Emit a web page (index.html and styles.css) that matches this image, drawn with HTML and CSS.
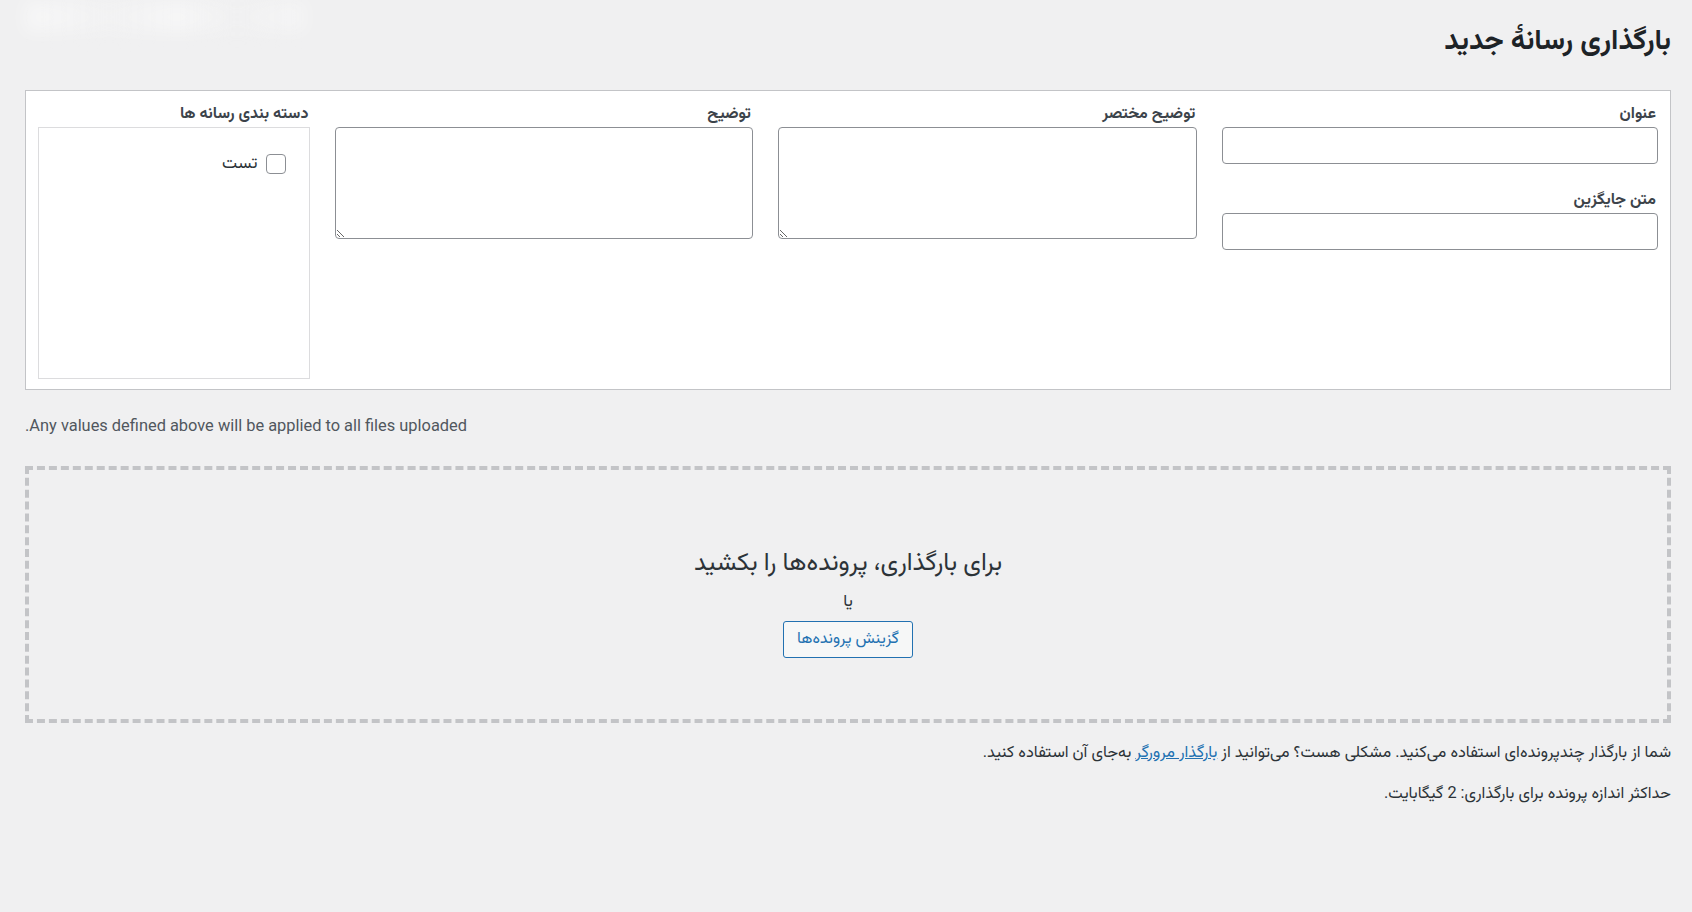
FILE: index.html
```html
<!DOCTYPE html>
<html lang="fa" dir="rtl">

<head>
    <meta charset="UTF-8">
    <meta name="viewport" content="width=device-width, initial-scale=1.0">
    <title>بارگذاری رسانهٔ جدید</title>
    <link rel="stylesheet" href="styles.css">
</head>

<body>

    <div class="wrap">
        <div class="page-header">
            <h1>بارگذاری رسانهٔ جدید</h1>
            <div class="blurred-bar"></div>
        </div>

        <div class="fields-box">
            <div class="field-col">
                <label class="field-label" for="title">عنوان</label>
                <input type="text" class="text-input" id="title">

                <label class="field-label second" for="alt">متن جایگزین</label>
                <input type="text" class="text-input" id="alt">
            </div>

            <div class="field-col">
                <label class="field-label" for="excerpt">توضیح مختصر</label>
                <textarea class="text-area" id="excerpt"></textarea>
            </div>

            <div class="field-col">
                <label class="field-label" for="content">توضیح</label>
                <textarea class="text-area" id="content"></textarea>
            </div>

            <div class="field-col">
                <span class="field-label">دسته بندی رسانه ها</span>
                <div class="cat-box">
                    <label class="cat-item">
                        <input type="checkbox" class="cat-check">
                        <span>تست</span>
                    </label>
                </div>
            </div>
        </div>

        <p class="note">Any values defined above will be applied to all files uploaded.</p>

        <div class="drop-area">
            <p class="drop-title">برای بارگذاری، پرونده‌ها را بکشید</p>
            <p class="drop-or">یا</p>
            <button type="button" class="btn-select">گزینش پرونده‌ها</button>
        </div>

        <p class="help-text">شما از بارگذار چندپرونده‌ای استفاده می‌کنید. مشکلی هست؟ می‌توانید از <a href="#">بارگذار مرورگر</a> به‌جای آن استفاده کنید.</p>
        <p class="help-text max-size">حداکثر اندازه پرونده برای بارگذاری: 2 گیگابایت.</p>
    </div>

</body>
</html>
```

FILE: styles.css
```css
body {
    margin: 0;
    background-color: #f0f0f1;
    color: #2c3338;
    font-family: Roboto, "Vazirmatn", "Noto Sans Arabic", "DejaVu Sans", sans-serif;
    font-size: 16px;
}

.wrap {
    margin: 0 21px 0 25px;
}

.page-header {
    display: flex;
    justify-content: space-between;
    align-items: flex-start;
    height: 90px;
}

.page-header h1 {
    margin: 22px 0 0;
    font-size: 28.5px;
    line-height: 36px;
    font-weight: 700;
    color: #1d2327;
}

.blurred-bar {
    width: 280px;
    height: 30px;
    margin: 2px 0 0 0;
    background: linear-gradient(90deg, rgba(255, 255, 255, 0.5), rgba(250, 250, 250, 0.2) 30%, rgba(255, 255, 255, 0.45) 55%, rgba(245, 245, 245, 0.15) 75%, rgba(255, 255, 255, 0.4));
    filter: blur(9px);
}

/* box of fields */
.fields-box {
    display: grid;
    grid-template-columns: 435fr 419fr 417fr 272fr;
    column-gap: 25px;
    padding: 12px 12px 10px;
    background-color: #fff;
    border: 1px solid #c3c4c7;
}

.field-col {
    display: flex;
    flex-direction: column;
}

.field-label {
    display: block;
    margin-bottom: 4px;
    padding-right: 2px;
    font-size: 16px;
    line-height: 20px;
    font-weight: 700;
    color: #3c434a;
}

.field-label.second {
    margin-top: 25px;
}

.text-input,
.text-area {
    box-sizing: border-box;
    width: 100%;
    margin: 0;
    background-color: #fff;
    border: 1px solid #8c8f94;
    border-radius: 4px;
    font-family: inherit;
    font-size: 16px;
}

.text-input {
    height: 37px;
}

.text-area {
    height: 112px;
}

.cat-box {
    box-sizing: border-box;
    height: 252px;
    padding: 23px 23px 0;
    border: 1px solid #dcdcde;
}

.cat-item {
    display: flex;
    align-items: center;
    gap: 9px;
    font-size: 17px;
    color: #2c3338;
}

.cat-check {
    appearance: none;
    width: 20px;
    height: 20px;
    margin: 0;
    border: 1px solid #8c8f94;
    border-radius: 4px;
    background-color: #fff;
}

.note {
    margin: 26px 0 0;
    text-align: left;
    font-size: 16.4px;
    line-height: 20px;
    color: #50575e;
}

/* drag and drop */
.drop-area {
    box-sizing: border-box;
    height: 257px;
    margin-top: 30px;
    padding-top: 78px;
    border: 4px dashed #c3c4c7;
    text-align: center;
}

.drop-title {
    margin: 0;
    font-size: 25px;
    line-height: 28px;
    color: #2c3338;
}

.drop-or {
    margin: 14px 0 0;
    font-size: 17px;
    line-height: 20px;
    color: #2c3338;
}

.btn-select {
    height: 37px;
    margin-top: 11px;
    padding: 0 13px;
    background-color: #f6f7f7;
    border: 1px solid #2271b1;
    border-radius: 3px;
    color: #2271b1;
    font-family: inherit;
    font-size: 16px;
    cursor: pointer;
}

.help-text {
    margin: 19px 0 0;
    font-size: 16.3px;
    line-height: 20px;
    color: #2c3338;
}

.help-text a {
    color: #2271b1;
}

.help-text.max-size {
    margin-top: 21px;
}
```
